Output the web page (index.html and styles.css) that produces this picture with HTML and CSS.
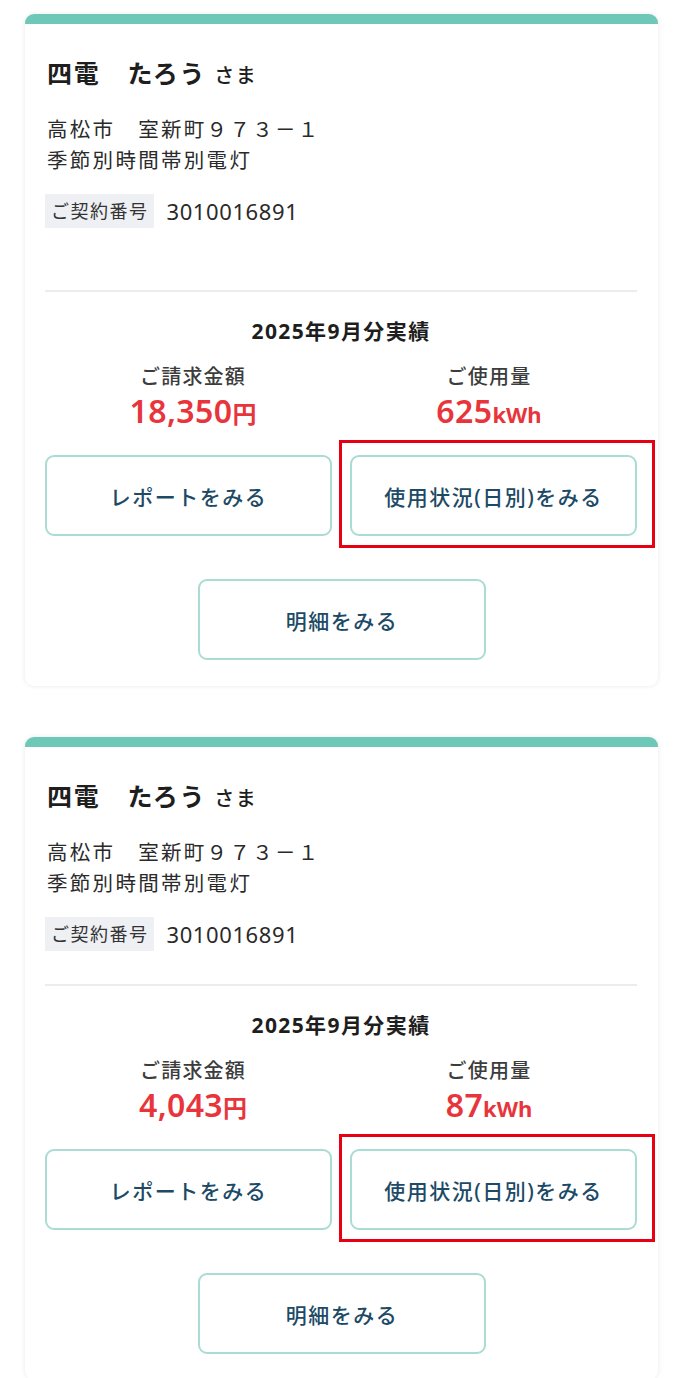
FILE: index.html
```html
<!DOCTYPE html>
<html lang="ja">
<head>
<meta charset="utf-8">
<title>ご契約一覧</title>
<link rel="stylesheet" href="styles.css">
</head>
<body>
<main class="page">
  <section class="card card--first">
    <div class="info">
      <h2 class="name">四電　たろう<span class="honorific">さま</span></h2>
      <p class="address">高松市　室新町９７３－１<br>季節別時間帯別電灯</p>
      <p class="contract"><span class="badge">ご契約番号</span><span class="contract-no">3010016891</span></p>
    </div>
    <div class="results">
      <h3 class="period">2025年9月分実績</h3>
      <div class="stats">
        <div class="stat">
          <div class="stat-label">ご請求金額</div>
          <div class="stat-value">18,350<span class="unit">円</span></div>
        </div>
        <div class="stat">
          <div class="stat-label">ご使用量</div>
          <div class="stat-value">625<span class="unit unit--kwh">kWh</span></div>
        </div>
      </div>
      <div class="actions">
        <button class="btn">レポートをみる</button>
        <div class="highlight-wrap">
          <button class="btn">使用状況(日別)をみる</button>
          <span class="highlight"></span>
        </div>
      </div>
      <div class="actions actions--single">
        <button class="btn">明細をみる</button>
      </div>
    </div>
  </section>

  <section class="card">
    <div class="info">
      <h2 class="name">四電　たろう<span class="honorific">さま</span></h2>
      <p class="address">高松市　室新町９７３－１<br>季節別時間帯別電灯</p>
      <p class="contract"><span class="badge">ご契約番号</span><span class="contract-no">3010016891</span></p>
    </div>
    <div class="results">
      <h3 class="period">2025年9月分実績</h3>
      <div class="stats">
        <div class="stat">
          <div class="stat-label">ご請求金額</div>
          <div class="stat-value">4,043<span class="unit">円</span></div>
        </div>
        <div class="stat">
          <div class="stat-label">ご使用量</div>
          <div class="stat-value">87<span class="unit unit--kwh">kWh</span></div>
        </div>
      </div>
      <div class="actions">
        <button class="btn">レポートをみる</button>
        <div class="highlight-wrap">
          <button class="btn">使用状況(日別)をみる</button>
          <span class="highlight"></span>
        </div>
      </div>
      <div class="actions actions--single">
        <button class="btn">明細をみる</button>
      </div>
    </div>
  </section>
</main>
</body>
</html>
```

FILE: styles.css
```css
* {
  box-sizing: border-box;
}

html, body {
  margin: 0;
  padding: 0;
  background: #ffffff;
}

body {
  font-family: "Noto Sans", "Noto Sans CJK JP", sans-serif;
  color: #222222;
}

.page {
  width: 680px;
  padding: 14px 22px 0 25px;
  display: flex;
  flex-direction: column;
  gap: 51px;
}

.card {
  background: #ffffff;
  border-top: 10px solid #6ec8b7;
  border-radius: 9px;
  box-shadow: 0 0 5px rgba(0, 0, 0, 0.09);
  padding: 32px 21px 26px 20px;
}

.info {
  padding-left: 2px;
}

.card--first .info {
  padding-bottom: 29px;
}

.name {
  margin: 0;
  font-size: 25px;
  line-height: 34px;
  font-weight: 700;
  letter-spacing: 1.8px;
  color: #1e1e1e;
}

.honorific {
  margin-left: 8px;
  font-size: 20px;
  font-weight: 500;
  letter-spacing: 1.5px;
}

.address {
  margin: 21px 0 0;
  font-size: 20.5px;
  line-height: 31px;
  letter-spacing: 2.3px;
  color: #2a2a2a;
}

.contract {
  margin: 18px 0 0 -2px;
  display: flex;
  align-items: center;
  gap: 13px;
}

.badge {
  display: inline-block;
  height: 34px;
  line-height: 34px;
  padding: 0 5px 0 6px;
  background: #eef0f3;
  font-size: 18px;
  letter-spacing: 1.5px;
  color: #333333;
}

.contract-no {
  font-size: 22px;
  line-height: 34px;
  letter-spacing: 0.6px;
  color: #2a2a2a;
}

.results {
  border-top: 2px solid #ececec;
  margin-top: 33px;
  padding-top: 24px;
}

.period {
  margin: 0;
  text-align: center;
  font-size: 21px;
  line-height: 30px;
  font-weight: 700;
  letter-spacing: 1.4px;
  color: #1e1e1e;
}

.stats {
  margin-top: 17px;
  display: grid;
  grid-template-columns: 1fr 1fr;
  text-align: center;
}

.stat-label {
  font-size: 20px;
  line-height: 28px;
  letter-spacing: 1.2px;
  font-weight: 500;
  color: #3c3c3c;
}

.stat-value {
  font-size: 32px;
  line-height: 40px;
  font-weight: 600;
  letter-spacing: 0.4px;
  color: #e8353b;
}

.unit {
  font-size: 24px;
  line-height: 0;
  font-weight: 700;
  letter-spacing: 0;
}

.unit--kwh {
  font-size: 22px;
}

.actions {
  margin-top: 24px;
  display: grid;
  grid-template-columns: 1fr 1fr;
  gap: 18px;
}

.actions--single {
  margin-top: 43px;
  grid-template-columns: 288px;
  justify-content: center;
  padding-left: 2px;
}

.btn {
  display: block;
  width: 100%;
  height: 81px;
  background: #ffffff;
  border: 2px solid #a9dcd2;
  border-radius: 9px;
  font-family: "Noto Sans", "Noto Sans CJK JP", sans-serif;
  font-size: 21px;
  font-weight: 500;
  letter-spacing: 1.5px;
  color: #1d4a66;
  cursor: pointer;
}

.highlight-wrap {
  position: relative;
}

.highlight {
  position: absolute;
  top: -15px;
  left: -11px;
  right: -18px;
  bottom: -12px;
  border: 3px solid #e60012;
  pointer-events: none;
}
```
